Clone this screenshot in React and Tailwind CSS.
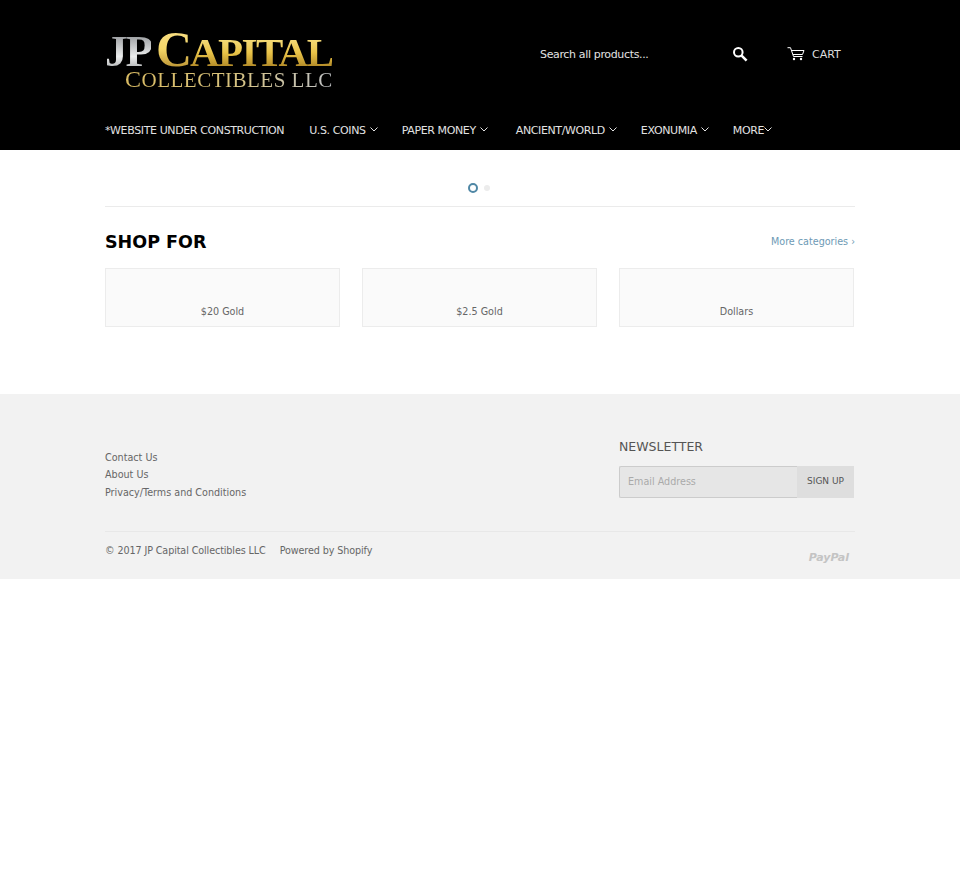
import React from "react";

const font = "font-['DejaVu_Sans',Verdana,sans-serif]";

function Chevron() {
  return (
    <svg width="8" height="5" viewBox="0 0 8 5" className="ml-[4px] mt-[-3px]" fill="none" stroke="currentColor" strokeWidth="1">
      <path d="M0.5 0.5 L4 4 L7.5 0.5" />
    </svg>
  );
}

function SearchIcon() {
  return (
    <svg width="16" height="16" viewBox="0 0 16 16" fill="none" stroke="#fff">
      <circle cx="6.3" cy="6.3" r="4.3" strokeWidth="2" />
      <path d="M9.6 9.6 L14.6 14.6" strokeWidth="2.6" />
    </svg>
  );
}

function CartIcon() {
  return (
    <svg width="18" height="14" viewBox="0 0 17 14" fill="none" stroke="#fff" strokeWidth="1">
      <path d="M0 0.7 H3 L6 9.5 H15" />
      <path d="M4 3.5 H16.5 L15 7.5 H5.5" />
      <circle cx="6.5" cy="12" r="1.2" fill="#fff" stroke="none" />
      <circle cx="13.5" cy="12" r="1.2" fill="#fff" stroke="none" />
    </svg>
  );
}

function Logo() {
  return (
    <div className="h-[66px] w-[230px] mt-[-8px] relative font-['Liberation_Serif',serif] leading-none whitespace-nowrap">
      <div className="flex items-baseline">
        <span className="text-[45px] font-bold pb-[10px] mr-[5px] tracking-[-2px] bg-gradient-to-b from-[#85888c] via-[#eceded] to-[#6d7074] bg-clip-text text-transparent">JP</span>
        <span className="text-[50px] font-bold mr-[-2px] bg-gradient-to-b from-[#f8e08c] via-[#f5d768] to-[#a97f20] bg-clip-text text-transparent">C</span>
        <span className="text-[41px] font-bold tracking-[-1.6px] bg-gradient-to-b from-[#fbe88f] via-[#e9c348] to-[#9c7419] bg-clip-text text-transparent">APITAL</span>
      </div>
      <div className="absolute left-[20px] top-[43px] text-[21px] tracking-[0.5px] bg-gradient-to-r from-[#d9bb63] via-[#d8c27c] to-[#bfc2c6] bg-clip-text text-transparent">
        <span className="text-[24px]">C</span>OLLECTIBLES LLC
      </div>
    </div>
  );
}

const navItems = [
  { label: "U.S. COINS", cls: "ml-[25px]" },
  { label: "PAPER MONEY", cls: "ml-[24px]" },
  { label: "ANCIENT/WORLD", cls: "ml-[28px]" },
  { label: "EXONUMIA", cls: "ml-[24px]" },
];

function Category({ name }) {
  return (
    <div className="h-[59px] bg-[#fafafa] border border-[#ececec] flex items-end justify-center pb-[7px] text-[9.6px] leading-[14px] text-[#666]">
      {name}
    </div>
  );
}

export default function App() {
  return (
    <div className={`${font} min-h-[876px] bg-white`}>
      <header className="bg-black h-[150px] text-[#e2e2e2]">
        <div className="w-[750px] mx-auto">
          <div className="h-[108px] pt-[32px] flex">
            <Logo />
            <div className="ml-[205px] w-[208px] h-[44px] flex items-center justify-between">
              <span className="text-[11px] tracking-[-0.35px] pt-[2px]">Search all products...</span>
              <SearchIcon />
            </div>
            <div className="ml-[39px] h-[44px] flex items-center text-[11px] text-[#ddd] pb-[1px]">
              <CartIcon />
              <span className="ml-[7px] pt-[3px]">CART</span>
            </div>
          </div>
          <nav className="flex items-center h-[42px] pt-[4px] text-[11px] tracking-[-0.38px] whitespace-nowrap">
            <span>*WEBSITE UNDER CONSTRUCTION</span>
            {navItems.map((n) => (
              <span key={n.label} className={`flex items-center ${n.cls}`}>
                {n.label}
                <Chevron />
              </span>
            ))}
            <span className="flex items-center ml-[24px]">
              MORE
              <svg width="8" height="5" viewBox="0 0 8 5" className="mt-[-3px]" fill="none" stroke="currentColor" strokeWidth="1">
                <path d="M0.5 0.5 L4 4 L7.5 0.5" />
              </svg>
            </span>
          </nav>
        </div>
      </header>

      <main className="w-[750px] mx-auto h-[244px]">
        <div className="h-[57px] border-b border-[#ebebeb] flex items-start justify-center gap-[6px] pt-[33px] pr-[2px]">
          <span className="w-[10px] h-[10px] rounded-full border-2 border-[#4f87a5]"></span>
          <span className="w-[6px] h-[6px] mt-[2px] rounded-full bg-[#ececec]"></span>
        </div>
        <div className="flex items-center justify-between h-[61px] pt-[10px]">
          <h2 className="text-[17.5px] font-bold text-black">SHOP FOR</h2>
          <a className="text-[9.6px] text-[#6d9ab5]">More categories ›</a>
        </div>
        <div className="grid grid-cols-[235px_235px_235px] gap-[22px]">
          <Category name="$20 Gold" />
          <Category name="$2.5 Gold" />
          <Category name="Dollars" />
        </div>
      </main>

      <footer className="bg-[#f2f2f2] h-[185px] text-[#666]">
        <div className="w-[750px] mx-auto">
          <div className="h-[138px] border-b border-[#e8e8e8] flex justify-between">
            <ul className="pt-[55px] text-[9.6px] leading-[17.3px]">
              <li>Contact Us</li>
              <li>About Us</li>
              <li>Privacy/Terms and Conditions</li>
            </ul>
            <div className="w-[236px] pt-[45px]">
              <h4 className="text-[12.5px] leading-[16px] text-[#555]">NEWSLETTER</h4>
              <div className="flex mt-[11px] h-[32px]">
                <div className="w-[178px] bg-[#e6e6e6] border border-[#ccc] border-r-0 rounded-l-[2px] pl-[8px] flex items-center text-[9.6px] text-[#aaa]">
                  Email Address
                </div>
                <div className="w-[57px] bg-[#dedede] flex items-center justify-center text-[9px] text-[#555]">
                  SIGN UP
                </div>
              </div>
            </div>
          </div>
          <div className="flex justify-between pt-[12px] text-[9.6px] tracking-[-0.1px]">
            <div className="flex gap-[14px]">
              <span>© 2017 JP Capital Collectibles LLC</span>
              <span>Powered by Shopify</span>
            </div>
            <span className="mr-[6px] mt-[7px] text-[11px] leading-[14px] font-bold italic tracking-normal text-[#c4c4c4]">PayPal</span>
          </div>
        </div>
      </footer>
    </div>
  );
}
